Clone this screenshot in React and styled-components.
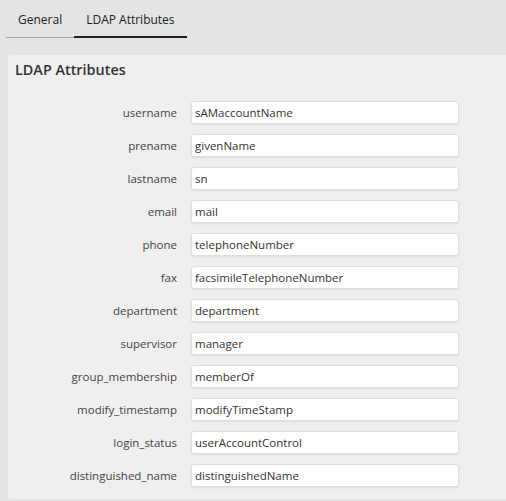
import styled, { createGlobalStyle } from "styled-components";
import { useState } from "react";

const GlobalStyle = createGlobalStyle`
  html, body {
    margin: 0;
    padding: 0;
    background: #e4e4e4;
    font-family: "Open Sans", "Liberation Sans", sans-serif;
    color: #333;
  }
`;

const fields = [
  ["username", "sAMaccountName"],
  ["prename", "givenName"],
  ["lastname", "sn"],
  ["email", "mail"],
  ["phone", "telephoneNumber"],
  ["fax", "facsimileTelephoneNumber"],
  ["department", "department"],
  ["supervisor", "manager"],
  ["group_membership", "memberOf"],
  ["modify_timestamp", "modifyTimeStamp"],
  ["login_status", "userAccountControl"],
  ["distinguished_name", "distinguishedName"],
];

export default function App() {
  const [tab, setTab] = useState("ldap");

  return (
    <Page>
      <GlobalStyle />
      <Tabs>
        <Tab $active={tab === "general"} onClick={() => setTab("general")}>General</Tab>
        <Tab $active={tab === "ldap"} onClick={() => setTab("ldap")}>LDAP Attributes</Tab>
      </Tabs>

      <Panel>
        <Heading>LDAP Attributes</Heading>
        <Form>
          {fields.map(([label, value]) => (
            <Row key={label}>
              <Label htmlFor={label}>{label}</Label>
              <Input id={label} defaultValue={value} />
            </Row>
          ))}
        </Form>
      </Panel>
    </Page>
  );
}

const Page = styled.div`
  width: 506px;
  min-height: 501px;
  overflow: hidden;
`;

const Tabs = styled.div`
  display: flex;
  padding-left: 6px;
`;

const Tab = styled.div`
  box-sizing: border-box;
  height: 38px;
  padding: 11px 12px 0 12px;
  font-size: 12px;
  line-height: 18px;
  color: #222;
  cursor: pointer;
  border-bottom: ${(p) => (p.$active ? "2px solid #222" : "1px solid #a6a6a6")};
`;

const Panel = styled.div`
  margin: 17px 0 0 8px;
  background: #efefef;
  border-radius: 3px 0 0 3px;
  padding: 5px 0 12px 7px;
`;

const Heading = styled.h2`
  margin: 0 0 21px 0;
  font-size: 14.4px;
  line-height: 20px;
  font-weight: 600;
  color: #333;
`;

const Form = styled.div`
  display: flex;
  flex-direction: column;
  gap: 10px;
`;

const Row = styled.div`
  display: grid;
  grid-template-columns: 162px 268px;
  column-gap: 14px;
  align-items: center;
`;

const Label = styled.label`
  text-align: right;
  font-size: 11.5px;
  color: #444;
`;

const Input = styled.input`
  box-sizing: border-box;
  height: 23px;
  width: 100%;
  padding: 0 3px;
  font-family: "Open Sans", "Liberation Sans", sans-serif;
  font-size: 11.5px;
  color: #333;
  background: #fff;
  border: 1px solid #dedede;
  border-radius: 3px;
  box-shadow: 0 1px 2px rgba(0, 0, 0, 0.08);
  outline: none;
`;
